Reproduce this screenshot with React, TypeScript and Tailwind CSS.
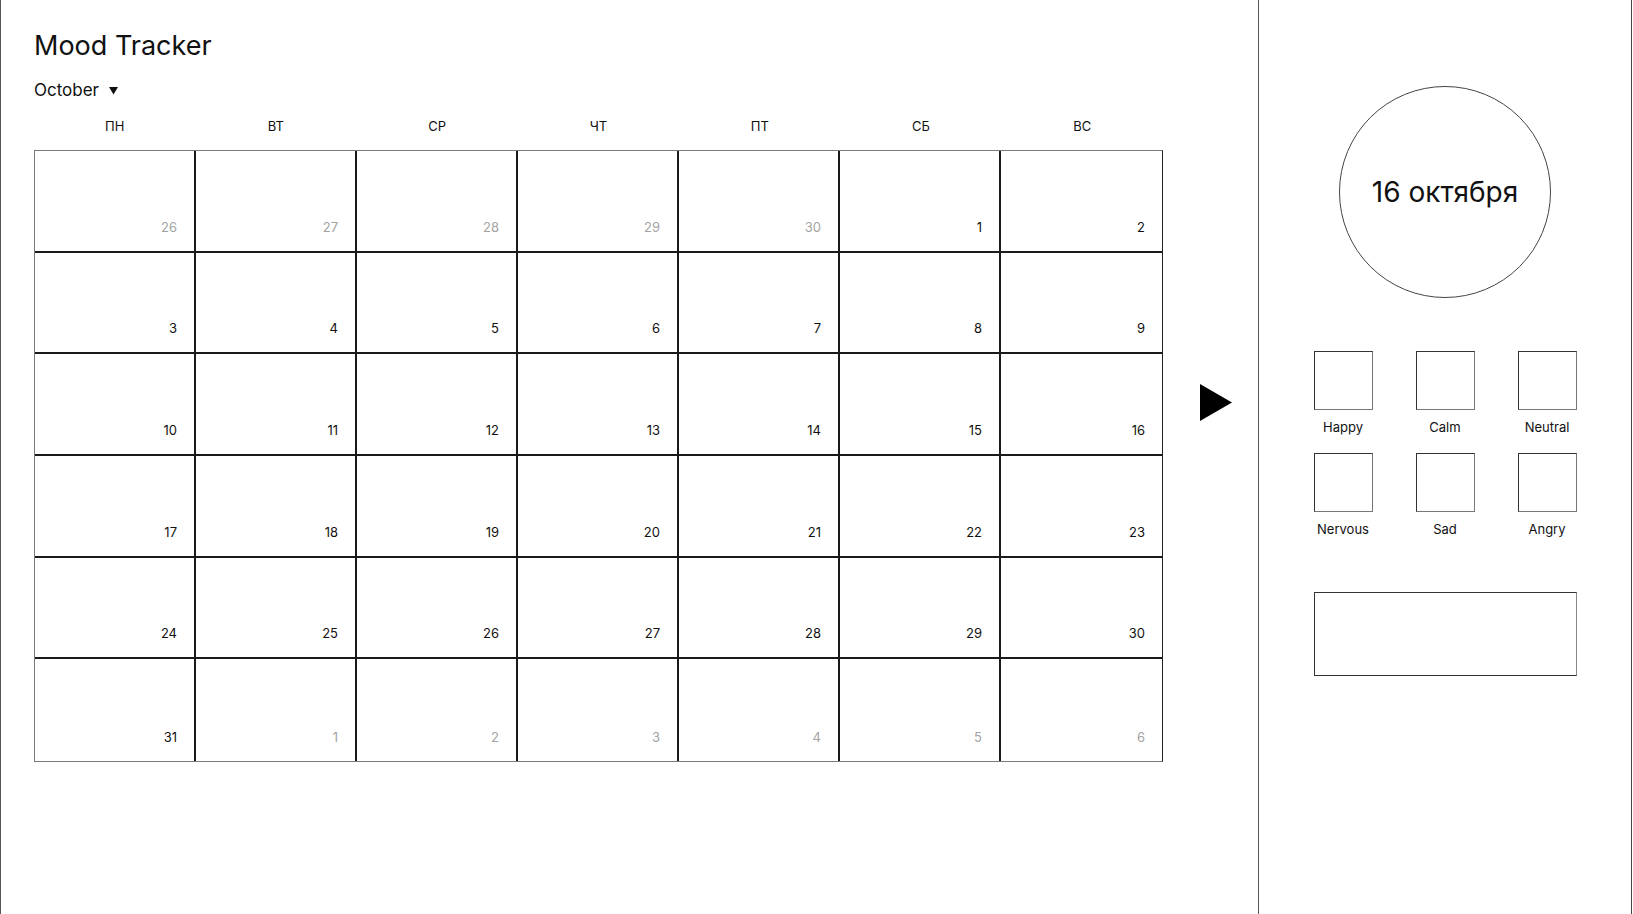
const weekDays = ["ПН", "ВТ", "СР", "ЧТ", "ПТ", "СБ", "ВС"];

type Day = { n: number; current: boolean };

const days: Day[] = [
  ...[26, 27, 28, 29, 30].map((n) => ({ n, current: false })),
  ...Array.from({ length: 31 }, (_, i) => ({ n: i + 1, current: true })),
  ...[1, 2, 3, 4, 5, 6].map((n) => ({ n, current: false })),
];

const moods = ["Happy", "Calm", "Neutral", "Nervous", "Sad", "Angry"];

export default function App() {
  return (
    <div className="flex h-[914px] w-[1633px] bg-white text-[#111] font-['Inter',sans-serif] overflow-hidden">
      {/* calendar side */}
      <main className="flex w-[1259px] shrink-0 border-l border-r border-[#555] pl-[33px] pt-[29px]">
        <div className="w-[1129px]">
          <h1 className="text-[27px] leading-[34px]">Mood Tracker</h1>

          <div className="mt-[17px] flex items-center gap-[10px] text-[17px] leading-[20px]">
            <span>October</span>
            <svg width="9" height="8" viewBox="0 0 9 8" className="mt-[1px]">
              <polygon points="0,0 9,0 4.5,7.5" fill="#111" />
            </svg>
          </div>

          <div className="mt-[18px] grid grid-cols-7 text-[13px] leading-[16px]">
            {weekDays.map((d) => (
              <div key={d} className="text-center">
                {d}
              </div>
            ))}
          </div>

          <div className="mt-[16px] grid h-[612px] grid-cols-7 grid-rows-6 border border-[#7a7a7a] border-r-[#222]">
            {days.map((d, i) => {
              const lastCol = i % 7 === 6;
              const lastRow = i >= 35;
              return (
                <div
                  key={i}
                  className={`flex items-end justify-end pb-[16px] pr-[17px] text-[13px] leading-[16px] border-[#1a1a1a] ${
                    lastCol ? "" : "border-r-2"
                  } ${lastRow ? "" : "border-b-2"} ${d.current ? "text-[#111]" : "text-[#a3a3a3]"}`}
                >
                  {d.n}
                </div>
              );
            })}
          </div>
        </div>

        <button className="ml-[37px] mt-[355px] self-start">
          <svg width="32" height="37" viewBox="0 0 32 37">
            <polygon points="0,0 32,18.5 0,37" fill="#000" />
          </svg>
        </button>
      </main>

      {/* day detail side */}
      <aside className="flex w-[373px] shrink-0 flex-col items-center border-r border-[#444]">
        <div className="mt-[86px] flex h-[212px] w-[212px] items-center justify-center rounded-full border border-[#444]">
          <span className="text-[28px] leading-[32px]">16 октября</span>
        </div>

        <div className="mt-[53px] grid w-[263px] grid-cols-3 justify-between gap-x-[43px] gap-y-[18px]">
          {moods.map((m) => (
            <div key={m} className="flex w-[59px] flex-col items-center">
              <div className="h-[59px] w-[59px] border border-[#333] border-r-[#777] border-b-[#777]" />
              <span className="mt-[9px] whitespace-nowrap text-[13px] leading-[16px]">{m}</span>
            </div>
          ))}
        </div>

        <div className="mt-[55px] h-[84px] w-[263px] border border-[#333] border-r-[#888]" />
      </aside>
    </div>
  );
}
